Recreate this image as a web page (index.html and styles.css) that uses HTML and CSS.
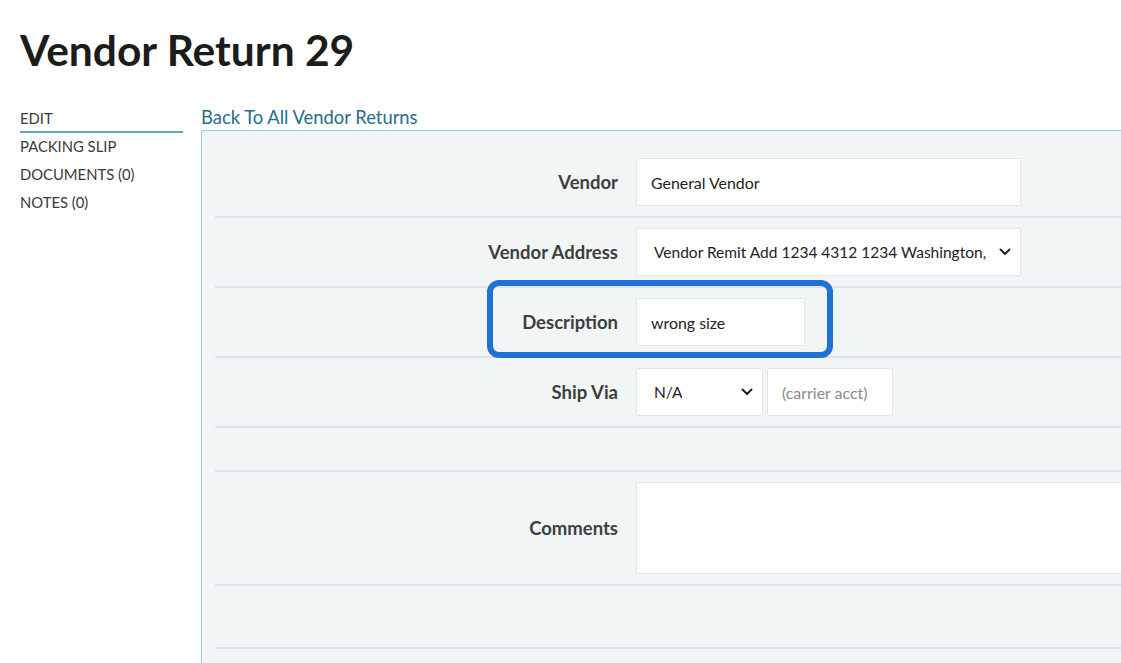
FILE: index.html
```html
<!DOCTYPE html>
<html lang="en">
<head>
<meta charset="utf-8">
<title>Vendor Return 29</title>
<link rel="stylesheet" href="styles.css">
</head>
<body>
<div class="page">
  <h1 class="title">Vendor Return 29</h1>
  <div class="layout">
    <nav class="sidenav">
      <a class="navitem active">EDIT</a>
      <a class="navitem">PACKING SLIP</a>
      <a class="navitem">DOCUMENTS (0)</a>
      <a class="navitem">NOTES (0)</a>
    </nav>
    <main class="main">
      <a class="backlink">Back To All Vendor Returns</a>
      <div class="panel">
        <div class="row">
          <label class="label">Vendor</label>
          <div class="field w385">General Vendor</div>
        </div>
        <div class="row">
          <label class="label">Vendor Address</label>
          <div class="select w385">
            <span class="seltext">Vendor Remit Add 1234 4312 1234 Washington,</span>
            <svg class="chev" viewBox="0 0 12 8" width="12" height="8"><path d="M1.5 1.5 L6 6 L10.5 1.5" fill="none" stroke="#222" stroke-width="2" stroke-linecap="round" stroke-linejoin="round"/></svg>
          </div>
        </div>
        <div class="row">
          <label class="label">Description</label>
          <div class="field w169">wrong size</div>
          <div class="highlight"></div>
        </div>
        <div class="row">
          <label class="label">Ship Via</label>
          <div class="select w127">
            <span class="seltext">N/A</span>
            <svg class="chev" viewBox="0 0 12 8" width="12" height="8"><path d="M1.5 1.5 L6 6 L10.5 1.5" fill="none" stroke="#222" stroke-width="2" stroke-linecap="round" stroke-linejoin="round"/></svg>
          </div>
          <div class="field w126 placeholder">(carrier acct)</div>
        </div>
        <div class="row empty44"></div>
        <div class="row">
          <label class="label">Comments</label>
          <div class="textarea"></div>
        </div>
        <div class="row empty63"></div>
      </div>
    </main>
  </div>
</div>
</body>
</html>
```

FILE: styles.css
```css
* { box-sizing: border-box; }
html, body { margin: 0; padding: 0; background: #fff; }
body {
  font-family: "Lato", "Source Sans Pro", "Liberation Sans", sans-serif;
  color: #333;
  overflow: hidden;
  width: 1121px;
  height: 663px;
}
.page { padding: 0 0 0 20px; height: 663px; overflow: hidden; }
.title {
  margin: 0;
  padding-top: 24px;
  height: 105px;
  font-size: 42.5px;
  line-height: 52px;
  font-weight: 700;
  color: #1c1c1c;
}
.layout { display: flex; gap: 18px; }
.sidenav { flex: none; width: 163px; display: flex; flex-direction: column; }
.navitem {
  display: block;
  font-size: 14.8px;
  line-height: 26px;
  height: 28px;
  color: #3a3a3a;
  white-space: nowrap;
}
.navitem.active { border-bottom: 2px solid #5ea8c0; }
.main { flex: none; width: 1000px; display: flex; flex-direction: column; }
.backlink {
  font-size: 18.4px;
  line-height: 25px;
  height: 25px;
  color: #1f6e8c;
}
.panel {
  background: #f2f5f6;
  border-left: 1px solid #9ccad9;
  border-top: 1px solid #9ccad9;
  border-top-left-radius: 3px;
  padding: 17px 0 0 13px;
  height: 533px;
}
.row {
  position: relative;
  display: flex;
  align-items: center;
  padding: 10px 0;
  border-bottom: 2px solid #dfe3e5;
}
.label {
  width: 403px;
  margin-right: 18px;
  text-align: right;
  font-size: 18.5px;
  font-weight: 700;
  color: #3e3e3e;
  white-space: nowrap;
}
.field, .select {
  height: 48px;
  background: #fff;
  border: 1px solid #e2e5e7;
  border-radius: 2px;
  display: flex;
  align-items: center;
  padding: 0 14px;
  font-size: 15.9px;
  color: #222;
  white-space: nowrap;
  overflow: hidden;
}
.select { justify-content: space-between; padding: 0 9px 0 17px; font-size: 15.5px; }
.seltext { overflow: hidden; margin-right: 12px; }
.chev { flex: none; }
.w385 { width: 385px; }
.w169 { width: 169px; }
.w127 { width: 127px; }
.w126 { width: 126px; margin-left: 4px; }
.placeholder { color: #8a8a8a; }
.textarea {
  width: 560px;
  height: 92px;
  background: #fff;
  border: 1px solid #e2e5e7;
  border-radius: 2px;
}
.empty44 { height: 44px; padding: 0; }
.empty63 { height: 63px; padding: 0; }
.highlight {
  position: absolute;
  left: 272px;
  top: -8px;
  width: 346px;
  height: 78px;
  border: 6px solid #1e73d2;
  border-radius: 12px;
  pointer-events: none;
}
```
